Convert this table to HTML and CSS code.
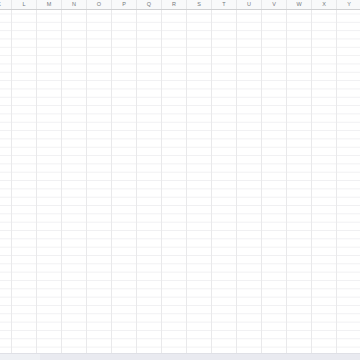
FILE: index.html
```html
<!DOCTYPE html>
<html>
<head>
<meta charset="utf-8">
<link rel="stylesheet" href="styles.css">
</head>
<body>
<div class="sheet">
  <div class="col-head">
    <div class="ch">K</div>
    <div class="ch">L</div>
    <div class="ch">M</div>
    <div class="ch">N</div>
    <div class="ch">O</div>
    <div class="ch">P</div>
    <div class="ch">Q</div>
    <div class="ch">R</div>
    <div class="ch">S</div>
    <div class="ch">T</div>
    <div class="ch">U</div>
    <div class="ch">V</div>
    <div class="ch">W</div>
    <div class="ch">X</div>
    <div class="ch">Y</div>
  </div>
  <div class="cells"></div>
  <div class="tabs">
    <div class="tab"></div>
    <div class="tab-fill"></div>
  </div>
</div>
</body>
</html>
```
FILE: styles.css
```css
html, body {
  margin: 0;
  padding: 0;
  background: #ffffff;
  overflow: hidden;
}
.sheet {
  width: 360px;
  height: 360px;
  display: flex;
  flex-direction: column;
  overflow: hidden;
}
.col-head {
  height: 9px;
  flex: none;
  display: flex;
  margin-left: -13px;
  background: #f8f9fa;
  border-bottom: 1px solid #cfd0d2;
}
.ch {
  flex: none;
  width: 24px;
  border-right: 1px solid #e6e7e9;
  font-family: "Liberation Sans", Arial, sans-serif;
  font-size: 5.5px;
  line-height: 9px;
  color: #74777b;
  text-align: center;
}
.cells {
  flex: 1;
  background-color: #ffffff;
  background-image:
    linear-gradient(to right, #e9e9eb 0, #e9e9eb 1px, transparent 1px),
    linear-gradient(to bottom, #f0f0f2 0, #f0f0f2 1px, transparent 1px);
  background-size: 25px 100%, 100% 8.333px;
  background-position: 11px 0, 0 3.5px;
}
.tabs {
  height: 6px;
  flex: none;
  display: flex;
  background: #e9eaf0;
  border-top: 1px solid #dfe0e6;
}
.tab {
  width: 40px;
  background: #eef0f4;
}
.tab-fill {
  flex: 1;
}
```
